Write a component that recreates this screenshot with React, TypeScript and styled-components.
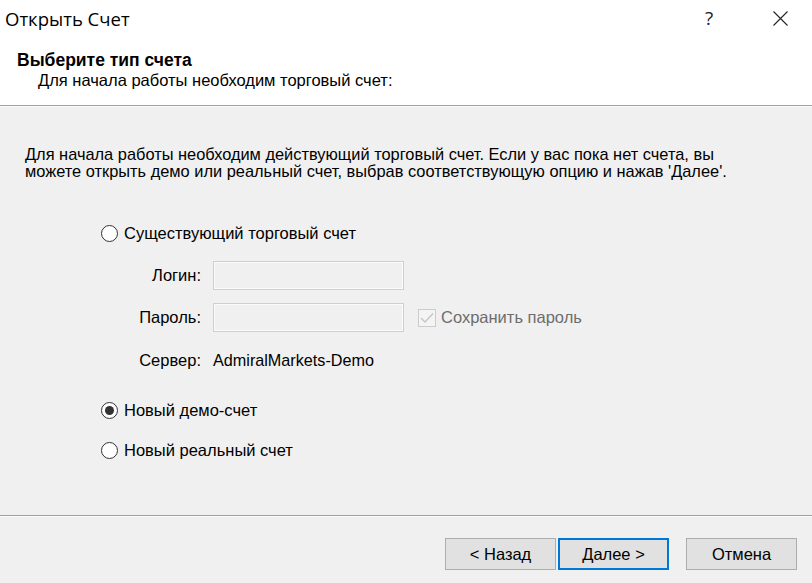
import React from "react";
import styled, { createGlobalStyle } from "styled-components";

const Global = createGlobalStyle`
  html, body { margin: 0; padding: 0; background: #f0f0f0; }
  body { font-family: "Liberation Sans", Arial, sans-serif; color: #000; }
`;

const Window = styled.div`
  width: 812px;
  height: 583px;
  display: flex;
  flex-direction: column;
  background: #f0f0f0;
  overflow: hidden;
`;

const TitleBar = styled.div`
  height: 36px;
  background: #fff;
  display: flex;
  align-items: center;
  padding-left: 5px;
`;

const TitleText = styled.div`
  flex: 1;
  font-family: "Open Sans", "Noto Sans", sans-serif;
  font-size: 18.5px;
  color: #000;
  margin-top: 1px;
`;

const TitleButton = styled.div<{ $w: number }>`
  width: ${(p) => p.$w}px;
  height: 36px;
  display: flex;
  align-items: center;
  justify-content: center;
  font-family: "Open Sans", sans-serif;
  font-size: 19px;
  color: #222;
`;

const Header = styled.div`
  background: #fff;
  height: 70px;
  padding: 14px 0 0 17px;
  box-sizing: border-box;
  border-bottom: 1px solid #a0a0a0;
`;

const HeaderTitle = styled.div`
  font-weight: bold;
  font-size: 17.5px;
  line-height: 21px;
`;

const HeaderSub = styled.div`
  padding-left: 21px;
  font-size: 16.5px;
  line-height: 19px;
`;

const Body = styled.div`
  flex: 1;
  padding: 39px 0 0 25px;
  border-top: 1px solid #fcfcfc;
`;

const Intro = styled.p`
  margin: 0;
  font-size: 16.4px;
  line-height: 17px;
`;

const Options = styled.div`
  margin: 43px 0 0 76px;
  display: flex;
  flex-direction: column;
`;

const RadioRow = styled.label<{ $mt?: number }>`
  display: flex;
  align-items: center;
  gap: 6px;
  height: 20px;
  font-size: 16.5px;
  margin-top: ${(p) => p.$mt ?? 0}px;
`;

const RadioCircle = styled.span<{ $checked?: boolean }>`
  width: 17px;
  height: 17px;
  box-sizing: border-box;
  border: 1px solid #333;
  border-radius: 50%;
  background: #fff;
  display: flex;
  align-items: center;
  justify-content: center;
  &::after {
    content: "";
    display: ${(p) => (p.$checked ? "block" : "none")};
    width: 9px;
    height: 9px;
    border-radius: 50%;
    background: #333;
  }
`;

const FieldGrid = styled.div`
  display: grid;
  grid-template-columns: 100px 191px auto;
  column-gap: 12px;
  row-gap: 13px;
  align-items: center;
  margin-top: 18px;
`;

const FieldLabel = styled.div`
  text-align: right;
  font-size: 16.5px;
  line-height: 19px;
`;

const Input = styled.div`
  height: 29px;
  box-sizing: border-box;
  border: 1px solid #cfcfcf;
  box-shadow: inset 0 0 0 1px #fafafa;
  background: #f0f0f0;
`;

const CheckRow = styled.div`
  display: flex;
  align-items: center;
  gap: 5px;
  margin-left: 2px;
  font-size: 16.5px;
  color: #6d6d6d;
`;

const CheckBox = styled.span`
  width: 18px;
  height: 18px;
  box-sizing: border-box;
  border: 1px solid #cccccc;
  background: #f4f4f4;
  display: flex;
  align-items: center;
  justify-content: center;
`;

const ServerLabel = styled(FieldLabel)`
  padding-top: 6px;
`;

const ServerValue = styled.div`
  grid-column: 2 / 4;
  font-size: 16.2px;
  line-height: 19px;
  padding-top: 6px;
`;

const Footer = styled.div`
  height: 68px;
  border-top: 1px solid #a0a0a0;
  box-shadow: inset 0 1px 0 #fcfcfc;
  display: flex;
  justify-content: flex-end;
  align-items: flex-start;
  padding: 22px 15px 0 0;
  box-sizing: border-box;
`;

const Button = styled.button<{ $default?: boolean; $ml?: number }>`
  width: 111px;
  height: 32px;
  margin-left: ${(p) => p.$ml ?? 0}px;
  background: #e1e1e1;
  border: ${(p) => (p.$default ? "2px solid #0078d7" : "1px solid #adadad")};
  font-family: "Liberation Sans", Arial, sans-serif;
  font-size: 16.5px;
  color: #000;
  padding: 0;
`;

export default function App() {
  return (
    <Window>
      <Global />
      <TitleBar>
        <TitleText>Открыть Счет</TitleText>
        <TitleButton $w={78}>?</TitleButton>
        <TitleButton $w={64}>
          <svg width="15" height="15" viewBox="0 0 15 15">
            <path d="M0.5 0.5 L14.5 14.5 M14.5 0.5 L0.5 14.5" stroke="#222" strokeWidth="1.1" fill="none" />
          </svg>
        </TitleButton>
      </TitleBar>
      <Header>
        <HeaderTitle>Выберите тип счета</HeaderTitle>
        <HeaderSub>Для начала работы необходим торговый счет:</HeaderSub>
      </Header>
      <Body>
        <Intro>
          Для начала работы необходим действующий торговый счет. Если у вас пока нет счета, вы
          <br />
          можете открыть демо или реальный счет, выбрав соответствующую опцию и нажав 'Далее'.
        </Intro>
        <Options>
          <RadioRow>
            <RadioCircle />
            Существующий торговый счет
          </RadioRow>
          <FieldGrid>
            <FieldLabel>Логин:</FieldLabel>
            <Input />
            <div />
            <FieldLabel>Пароль:</FieldLabel>
            <Input />
            <CheckRow>
              <CheckBox>
                <svg width="14" height="12" viewBox="0 0 14 12">
                  <path d="M1 6 L5 10 L13 1.5" stroke="#c4c4c4" strokeWidth="1.3" fill="none" />
                </svg>
              </CheckBox>
              Сохранить пароль
            </CheckRow>
            <ServerLabel>Сервер:</ServerLabel>
            <ServerValue>AdmiralMarkets-Demo</ServerValue>
          </FieldGrid>
          <RadioRow $mt={30}>
            <RadioCircle $checked />
            Новый демо-счет
          </RadioRow>
          <RadioRow $mt={20}>
            <RadioCircle />
            Новый реальный счет
          </RadioRow>
        </Options>
      </Body>
      <Footer>
        <Button>&lt; Назад</Button>
        <Button $default $ml={2}>Далее &gt;</Button>
        <Button $ml={17}>Отмена</Button>
      </Footer>
    </Window>
  );
}
